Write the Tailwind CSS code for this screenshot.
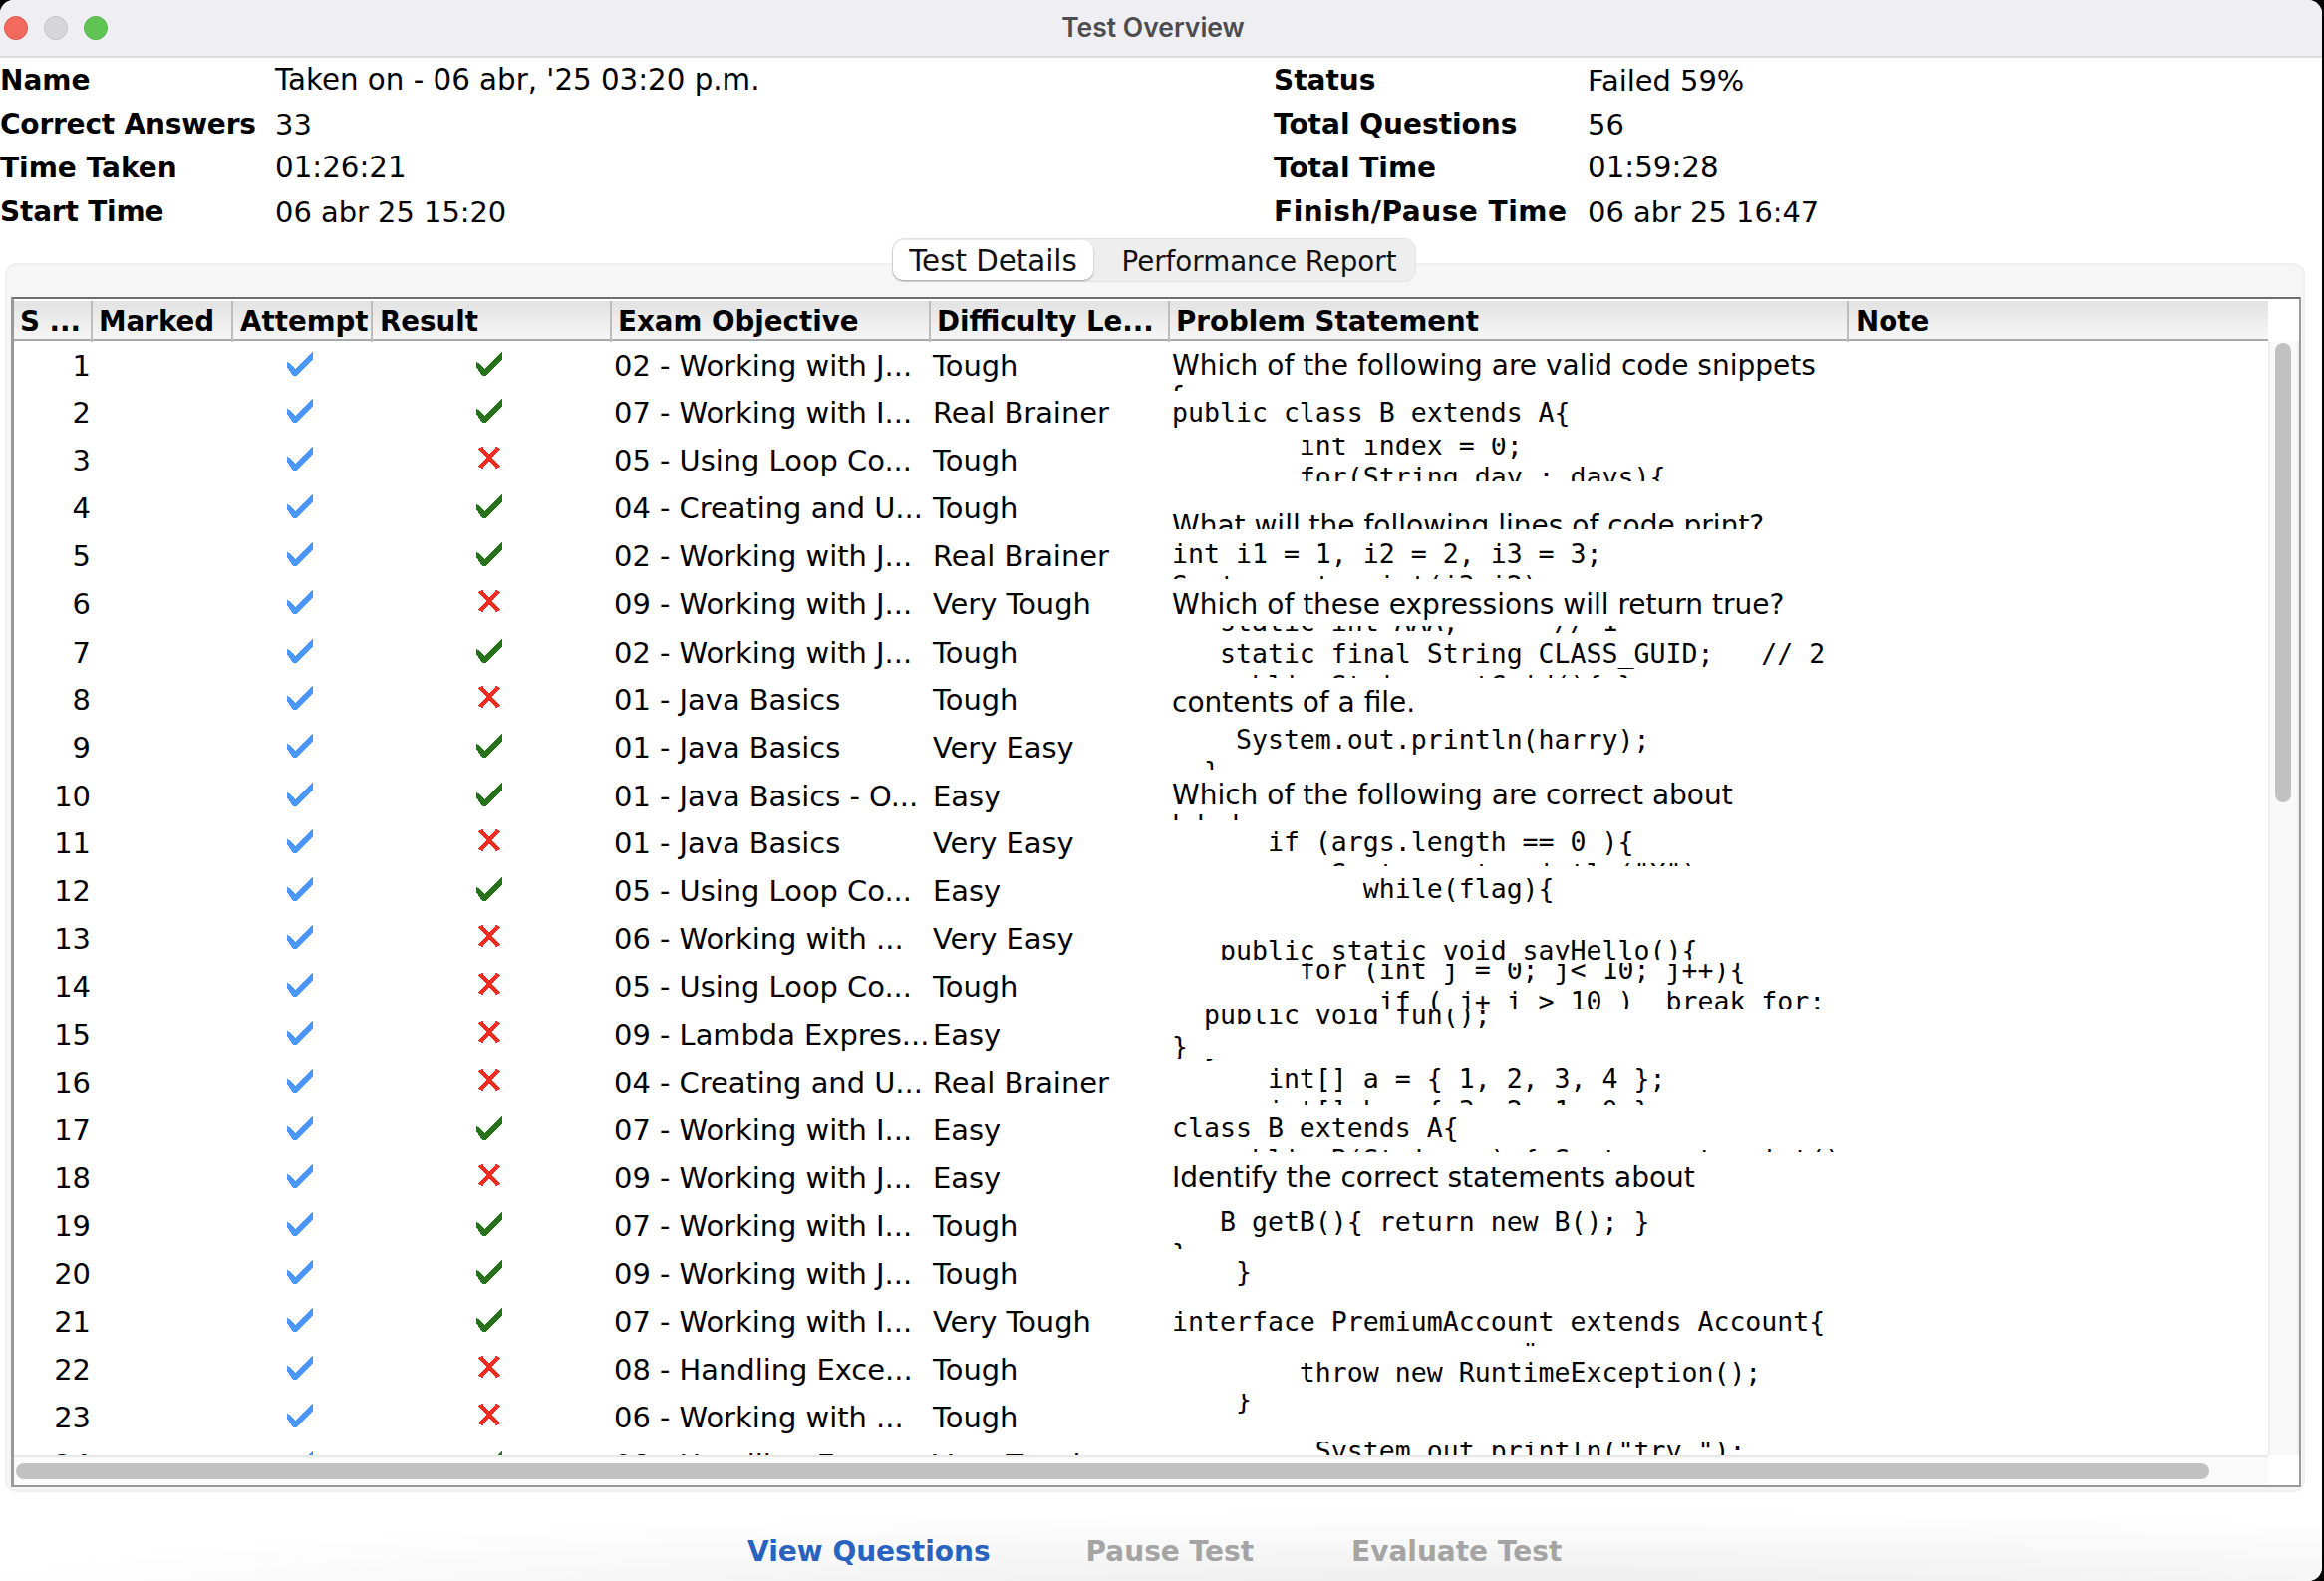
<!DOCTYPE html>
<html lang="en">
<head>
<meta charset="UTF-8">
<title>Test Overview</title>
<script src="https://cdn.jsdelivr.net/npm/@tailwindcss/browser@4"></script>
</head>
<body class="bg-black overflow-hidden">
<svg class="absolute w-0 h-0">
  <defs>
    <pattern id="dither" width="2" height="2" patternUnits="userSpaceOnUse">
      <rect width="2" height="2" fill="#2f8021"></rect>
      <rect width="1" height="1" fill="#1c6510"></rect>
      <rect x="1" y="1" width="1" height="1" fill="#1c6510"></rect>
    </pattern>
  </defs>
</svg>

<div class="w-[2330px] h-[1586px] bg-white rounded-t-[14px] rounded-br-[14px] flex flex-col overflow-hidden font-['DejaVu_Sans',sans-serif] text-[28.9px] text-black">

  <!-- title bar -->
  <div class="relative h-[58px] shrink-0 bg-[#efeef3] border-b-2 border-[#dddddd] flex items-center justify-center pr-[16px]">
    <div class="absolute left-1 top-4 flex gap-[16px]">
      <span class="w-6 h-6 rounded-full bg-[#f26a5e] border border-[#e0554a]"></span>
      <span class="w-6 h-6 rounded-full bg-[#d6d5da] border border-[#c4c3c8]"></span>
      <span class="w-6 h-6 rounded-full bg-[#5fc454] border border-[#52b348]"></span>
    </div>
    <span class="font-['Inter',sans-serif] font-semibold text-[26.5px] text-[#4c4c4e]">Test Overview</span>
  </div>

  <!-- summary -->
  <div class="grid grid-cols-[276px_1002px_315px_1fr] auto-rows-[44px] items-center shrink-0 leading-none pt-[1px]">
    <b class="text-[28px]">Name</b><span class="text-[29.3px]">Taken on - 06 abr, '25 03:20 p.m.</span><b class="text-[28px]">Status</b><span>Failed 59%</span>
    <b class="text-[28px] tracking-[-0.2px]">Correct Answers</b><span>33</span><b class="text-[28px]">Total Questions</b><span>56</span>
    <b class="text-[28px]">Time Taken</b><span class="text-[29.3px]">01:26:21</span><b class="text-[28px]">Total Time</b><span class="text-[29.3px]">01:59:28</span>
    <b class="text-[28px] tracking-[-0.2px]">Start Time</b><span>06 abr 25 15:20</span><b class="text-[28px] tracking-[0.5px] whitespace-nowrap">Finish/Pause Time</b><span>06 abr 25 16:47</span>
  </div>

  <!-- tabbed pane -->
  <div class="relative mt-[29px] ml-[5px] w-[2308px] h-[1233px] shrink-0 bg-[#f6f6f6] border-2 border-[#efefef] rounded-[12px] px-[4px] pt-[32px]">
    <div class="absolute left-[888px] -top-[27px] w-[526px] h-[44px] bg-[#eeeeee] border border-[#e2e2e2] rounded-[12px] flex items-center text-[#111111]">
      <div class="w-[201px] h-[40px] pt-[3px] bg-white rounded-[10px] shadow-[0_1px_2px_#00000055] flex items-center justify-center text-[29.3px]">Test Details</div>
      <div class="flex-1 pt-[3px] pl-[10px] text-center text-[27.7px]">Performance Report</div>
    </div>

    <!-- table -->
    <div class="w-[2298px] h-[1194px] bg-white border-l-[3px] border-r-2 border-b-2 border-[#999999] border-t-2 border-t-[#6e6e6e] pt-[2px] flex flex-col">
      <div class="flex h-[40px] shrink-0">
        <div class="w-[2262px] grid grid-cols-[79px_141px_140px_240px_320px_240px_681px_421px] bg-gradient-to-b from-[#e2e2e2] to-[#f6f6f6] border-b-2 border-[#aaaaaa] font-bold text-[27.7px] leading-[41px]">
          <div class="pl-[6px] border-r-2 border-[#bdbdbd]">S ...</div>
          <div class="pl-[6px] border-r-2 border-[#bdbdbd]">Marked</div>
          <div class="pl-[7px] border-r-2 border-[#bdbdbd]">Attempt</div>
          <div class="pl-[7px] border-r-2 border-[#bdbdbd]">Result</div>
          <div class="pl-[6px] border-r-2 border-[#bdbdbd]">Exam Objective</div>
          <div class="pl-[6px] border-r-2 border-[#bdbdbd]">Difficulty Le...</div>
          <div class="pl-[6px] border-r-2 border-[#bdbdbd]">Problem Statement</div>
          <div class="pl-[7px]">Note</div>
        </div>
      </div>
      <div class="flex h-[1118px] shrink-0">
        <div id="rows" class="w-[2262px] h-full overflow-hidden"></div>
        <div class="flex-1 bg-[#f9f9f9] border-x-2 border-[#eeeeee] pt-[2px] pl-[5px]">
          <div class="w-4 h-[461px] bg-[#c1c1c1] rounded-full"></div>
        </div>
      </div>
      <div class="flex flex-1">
        <div class="w-[2262px] bg-[#fafafa] border-t-2 border-[#e8e8e8] pt-[6px] pl-[2px]">
          <div class="w-[2201px] h-4 bg-[#c1c1c1] rounded-full"></div>
        </div>
      </div>
    </div>
  </div>

  <!-- actions -->
  <div class="flex-1 flex items-start pt-[39px] pl-[750px] font-bold text-[28px] bg-[radial-gradient(70%_100%_at_65%_120%,#ebebeb,#ffffff)]">
    <span class="text-[#2a62c0]">View Questions</span>
    <span class="ml-[96px] text-[#a4a4a4]">Pause Test</span>
    <span class="ml-[98px] text-[#a4a4a4]">Evaluate Test</span>
  </div>
</div>

<script>
  const check = `<svg width="26" height="24" shape-rendering="crispEdges"><polygon points="0,10 2,11 8,17 26,0 26,8 9,24 6,24 0,15" fill="#4a98ff"/></svg>`;
  const pass = `<svg width="26" height="24" shape-rendering="crispEdges"><polygon points="0,10 2,11 8,17 26,0 26,8 9,24 6,24 0,15" fill="url(#dither)"/></svg>`;
  const fail = `<svg width="26" height="24" shape-rendering="crispEdges"><path d="M4 1 L22 21 M22 1 L4 21" stroke="#ee2e24" stroke-width="4.5" fill="none"/></svg>`;

  const rows = [
    ['02 - Working with J...', 'Tough', 1],
    ['07 - Working with I...', 'Real Brainer', 1],
    ['05 - Using Loop Co...', 'Tough', 0],
    ['04 - Creating and U...', 'Tough', 1],
    ['02 - Working with J...', 'Real Brainer', 1],
    ['09 - Working with J...', 'Very Tough', 0],
    ['02 - Working with J...', 'Tough', 1],
    ['01 - Java Basics', 'Tough', 0],
    ['01 - Java Basics', 'Very Easy', 1],
    ['01 - Java Basics - O...', 'Easy', 1],
    ['01 - Java Basics', 'Very Easy', 0],
    ['05 - Using Loop Co...', 'Easy', 1],
    ['06 - Working with ...', 'Very Easy', 0],
    ['05 - Using Loop Co...', 'Tough', 0],
    ['09 - Lambda Expres...', 'Easy', 0],
    ['04 - Creating and U...', 'Real Brainer', 0],
    ['07 - Working with I...', 'Easy', 1],
    ['09 - Working with J...', 'Easy', 0],
    ['07 - Working with I...', 'Tough', 1],
    ['09 - Working with J...', 'Tough', 1],
    ['07 - Working with I...', 'Very Tough', 1],
    ['08 - Handling Exce...', 'Tough', 0],
    ['06 - Working with ...', 'Tough', 0],
    ['08 - Handling Exce...', 'Very Tough', 1],
  ];

  // problem text per row: sans?, clip top, clip bottom, first baseline (page y), lines
  const problems = [
    [1, 342, 392, 376, 'Which of the following are valid code snippets\nf'],
    [0, 394, 438, 423, 'public class B extends A{'],
    [0, 439, 483, 456, '        int index = 0;\n        for(String day : days){'],
    [1, 486, 531, 537, 'What will the following lines of code print?'],
    [0, 534, 581, 565, 'int i1 = 1, i2 = 2, i3 = 3;\nSystem.out.print(i3+i2);'],
    [1, 584, 628, 616, 'Which of these expressions will return true?'],
    [0, 628, 680, 633, '   static int AAA;      // 1\n   static final String CLASS_GUID;   // 2\n   public String getGuid(){ }'],
    [1, 684, 726, 714, 'contents of a file.'],
    [0, 726, 772, 751, '    System.out.println(harry);\n  }'],
    [1, 774, 823, 807, 'Which of the following are correct about\nlabels'],
    [0, 825, 869, 854, '      if (args.length == 0 ){\n          System.out.println("X");'],
    [0, 871, 918, 901, '            while(flag){'],
    [0, 918, 963, 963, '   public static void sayHello(){'],
    [0, 966, 1012, 982, '        for (int j = 0; j< 10; j++){\n             if ( j+ i > 10 )  break for;'],
    [0, 1012, 1062, 1027, '  public void fun();\n}'],
    [0, 1062, 1108, 1059, '  }\n      int[] a = { 1, 2, 3, 4 };\n      int[] b = { 3, 2, 1, 0 };'],
    [0, 1110, 1156, 1141, 'class B extends A{\n   public B(String s) { System.out.print(); }'],
    [1, 1158, 1206, 1191, 'Identify the correct statements about'],
    [0, 1206, 1253, 1235, '   B getB(){ return new B(); }\n}'],
    [0, 1254, 1302, 1285, '    }'],
    [0, 1302, 1350, 1335, 'interface PremiumAccount extends Account{\n                      "'],
    [0, 1350, 1398, 1386, '        throw new RuntimeException();'],
    [0, 1398, 1446, 1413, '    }'],
    [0, 1447, 1460, 1465, '         System.out.println("try ");'],
  ];

  document.getElementById('rows').innerHTML = rows.map((r, i) => {
    const [sans, top, bottom, base, text] = problems[i];
    const rowTop = 342 + 48 * i;
    return `<div class="grid grid-cols-[78px_141px_140px_240px_320px_240px_681px_420px] h-12 items-center whitespace-nowrap leading-[32px]">
      <div class="text-right pr-[1px]">${i + 1}</div>
      <div></div>
      <div class="flex justify-center pr-1 mb-1">${check}</div>
      <div class="flex justify-center pr-1 mb-1">${r[2] ? pass : fail}</div>
      <div class="pl-[3px]">${r[0]}</div>
      <div class="pl-[3px]">${r[1]}</div>
      <div class="self-start pl-[3px]">
        <div class="overflow-hidden" style="margin-top:${top - rowTop}px;height:${bottom - top}px">
          <pre class="${sans ? "font-['DejaVu_Sans',sans-serif] text-[28px]" : "font-['DejaVu_Sans_Mono',monospace] text-[26.55px]"} leading-[32px]" style="margin-top:${base - 25 - top}px">${text}</pre>
        </div>
      </div>
      <div></div>
    </div>`;
  }).join('');
</script>
</body>
</html>
